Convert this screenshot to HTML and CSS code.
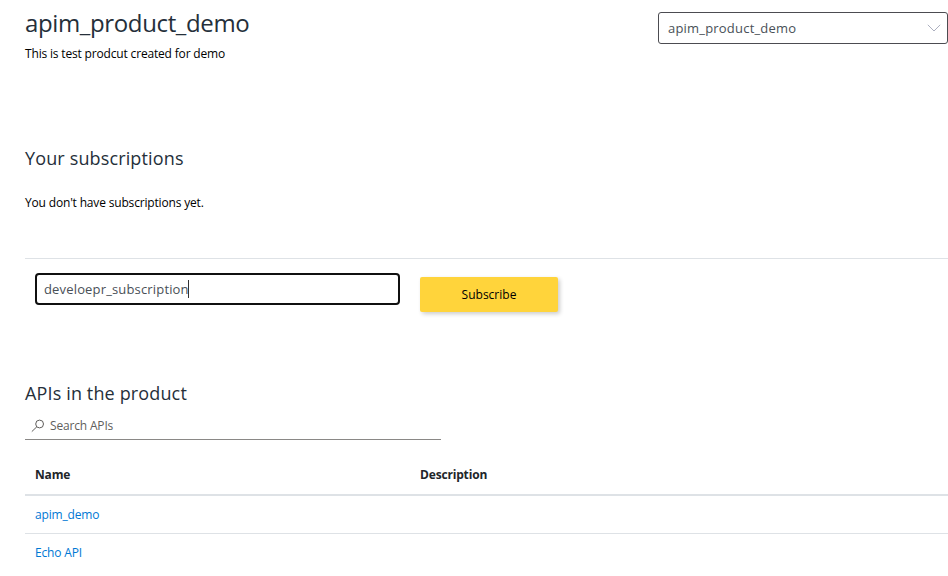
FILE: index.html
```html
<!DOCTYPE html>
<html lang="en">
<head>
  <meta charset="UTF-8">
  <meta name="viewport" content="width=device-width, initial-scale=1.0">
  <title>apim_product_demo</title>
  <link rel="stylesheet" href="styles.css">
</head>
<body>
  <main class="page">
    <header class="product-header">
      <div class="product-info">
        <h1>apim_product_demo</h1>
        <p>This is test prodcut created for demo</p>
      </div>
      <div class="product-select" tabindex="0">
        <span>apim_product_demo</span>
        <svg class="chevron" width="14" height="8" viewBox="0 0 14 8">
          <path d="M0.8 0.8 L7 7 L13.2 0.8" fill="none" stroke="#a3a6b8" stroke-width="0.9"/>
        </svg>
      </div>
    </header>

    <section class="subscriptions">
      <h2>Your subscriptions</h2>
      <p>You don't have subscriptions yet.</p>
      <div class="subscribe-form">
        <div class="name-input" role="textbox"><span>develoepr_subscription</span><i class="caret"></i></div>
        <button class="subscribe-btn">Subscribe</button>
      </div>
    </section>

    <section class="apis">
      <h2>APIs in the product</h2>
      <div class="search">
        <svg width="14" height="14" viewBox="0 0 14 14">
          <circle cx="8.6" cy="5" r="3.9" fill="none" stroke="#605e5c" stroke-width="1"/>
          <path d="M5.8 7.8 L0.8 12.6" fill="none" stroke="#605e5c" stroke-width="1"/>
        </svg>
        <span>Search APIs</span>
      </div>
      <div class="api-table">
        <div class="row head">
          <div>Name</div>
          <div>Description</div>
        </div>
        <div class="row">
          <div><a href="#">apim_demo</a></div>
          <div></div>
        </div>
        <div class="row">
          <div><a href="#">Echo API</a></div>
          <div></div>
        </div>
      </div>
    </section>
  </main>
</body>
</html>
```
FILE: styles.css
```css
* {
  box-sizing: border-box;
}

body {
  margin: 0;
  height: 576px;
  overflow: hidden;
  background: #fff;
  color: #000;
  font-family: "Open Sans", sans-serif;
  font-size: 12px;
  line-height: 18px;
  letter-spacing: -0.17px;
}

h1, h2, p {
  margin: 0;
  font-weight: 400;
}

.page {
  padding-left: 25px;
}

.product-header {
  display: flex;
  justify-content: space-between;
  height: 145px;
  padding-top: 6px;
}

h1 {
  color: #252f3a;
  font-size: 24px;
  line-height: 34px;
  letter-spacing: -0.36px;
}

.product-info p {
  margin-top: 5px;
}

.product-select {
  display: flex;
  align-items: center;
  justify-content: space-between;
  width: 290px;
  height: 32px;
  margin-top: 6px;
  padding: 0 6px 0 9px;
  border: 1px solid #4c4c51;
  border-radius: 3px;
  color: #495057;
  font-size: 13px;
  letter-spacing: 0.2px;
}

h2 {
  color: #252f3a;
  font-size: 18px;
  line-height: 26px;
  letter-spacing: 0.14px;
}

.subscriptions p {
  margin-top: 23px;
}

.subscribe-form {
  display: flex;
  align-items: flex-start;
  gap: 20px;
  height: 122px;
  margin-top: 46px;
  padding: 14px 0 0 10px;
  border-top: 1px solid #dee2e6;
}

.name-input {
  display: flex;
  align-items: center;
  width: 365px;
  height: 32px;
  padding-left: 7px;
  border: 2px solid #101010;
  border-radius: 4px;
  color: #495057;
  font-size: 13px;
  letter-spacing: 0.16px;
}

.caret {
  width: 1px;
  height: 18px;
  margin-left: -1px;
  background: #333;
}

.subscribe-btn {
  width: 138px;
  height: 35px;
  margin-top: 4px;
  padding: 0;
  border: none;
  border-radius: 2px;
  background: #ffd43b;
  box-shadow: 2px 2px 4px rgba(0, 0, 0, 0.2);
  color: #000;
  font: inherit;
}

.search {
  display: flex;
  align-items: center;
  gap: 5px;
  width: 416px;
  height: 34px;
  padding: 6px 0 0 6px;
  border-bottom: 1px solid #8a8886;
  color: #605e5c;
}

.api-table {
  margin-top: 16px;
}

.row {
  display: grid;
  grid-template-columns: 385px 1fr;
  align-items: center;
  height: 38px;
  padding-left: 10px;
  border-bottom: 1px solid #dee2e6;
}

.row:last-child {
  border-bottom: none;
}

.head {
  height: 40px;
  border-bottom-width: 2px;
  color: #212529;
  font-weight: 700;
}

a {
  color: #0078d4;
  text-decoration: none;
}
```
